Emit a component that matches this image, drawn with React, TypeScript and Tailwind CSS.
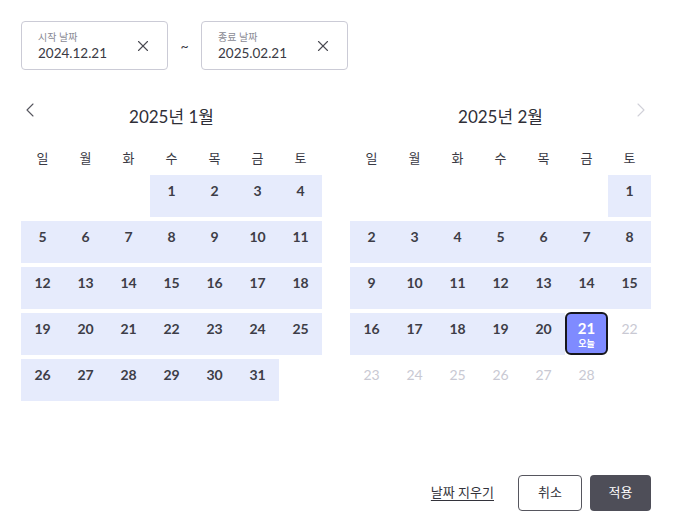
import { ChevronLeft, ChevronRight, X } from "lucide-react";

const days = ["일", "월", "화", "수", "목", "금", "토"];

type Cell = { n?: number; inRange?: boolean; disabled?: boolean; today?: boolean };

const jan: Cell[] = [
  {}, {}, {},
  ...Array.from({ length: 31 }, (_, i) => ({ n: i + 1, inRange: true })),
];

const feb: Cell[] = [
  {}, {}, {}, {}, {}, {},
  ...Array.from({ length: 28 }, (_, i) => {
    const n = i + 1;
    if (n < 21) return { n, inRange: true };
    if (n === 21) return { n, today: true };
    return { n, disabled: true };
  }),
];

const DateInput = ({ label, value }: { label: string; value: string }) => (
  <div className="w-[147px] h-[49px] border border-[#cbcbd6] rounded-[4px] flex items-center justify-between pl-[16px] pr-[15px]">
    <div className="flex flex-col pt-[1px]">
      <span className="text-[10px] leading-[13px] text-[#8a8a94]">{label}</span>
      <span className="text-[13.5px] leading-[18px] text-[#3a3a44]">{value}</span>
    </div>
    <X size={18} strokeWidth={1.5} className="text-[#4a4a52]" />
  </div>
);

const Month = ({ title, cells, prev, next }: { title: string; cells: Cell[]; prev?: boolean; next?: boolean }) => (
  <div className="w-[301px]">
    <div className="relative h-[24px] flex justify-center">
      {prev && (
        <ChevronLeft size={24} strokeWidth={1.1} className="absolute left-[-3px] top-[-7px] text-[#55555e]" />
      )}
      <span className="text-[17px] leading-[24px] text-[#2f2f38]">{title}</span>
      {next && (
        <ChevronRight size={24} strokeWidth={1.1} className="absolute right-[-2px] top-[-7px] text-[#d0d0d8]" />
      )}
    </div>
    <div className="grid grid-cols-7 mt-[19px] h-[20px]">
      {days.map((d) => (
        <div key={d} className="text-center text-[13px] leading-[20px] text-[#3a3a44]">{d}</div>
      ))}
    </div>
    <div className="grid grid-cols-7 gap-y-[4px] mt-[7px]">
      {cells.map((c, i) => {
        if (!c.n) return <div key={i} className="h-[42px]" />;
        if (c.today)
          return (
            <div key={i} className="h-[43px] -mt-[1px] bg-[#7f8bff] border-2 border-[#16161c] rounded-[6px] flex flex-col items-center pt-[4px]">
              <span className="text-[15px] leading-[20px] font-bold text-white">{c.n}</span>
              <span className="text-[9px] leading-[11px] font-bold text-white">오늘</span>
            </div>
          );
        return (
          <div
            key={i}
            className={
              "h-[42px] flex justify-center pt-[6px] " + (c.inRange ? "bg-[#e6ebfc]" : "")
            }
          >
            <span
              className={
                c.disabled
                  ? "text-[14px] leading-[20px] text-[#c9c9d3]"
                  : "text-[14px] leading-[20px] font-bold text-[#3d3d47]"
              }
            >
              {c.n}
            </span>
          </div>
        );
      })}
    </div>
  </div>
);

export default function App() {
  return (
    <div
      className="w-[680px] h-[532px] bg-white pt-[21px] px-[21px] flex flex-col"
      style={{ fontFamily: "Lato, 'Noto Sans CJK KR', sans-serif" }}
    >
      <div className="flex items-center">
        <DateInput label="시작 날짜" value="2024.12.21" />
        <span className="w-[33px] text-center text-[14px] text-[#3a3a44]">~</span>
        <DateInput label="종료 날짜" value="2025.02.21" />
      </div>

      <div className="flex gap-[28px] mt-[35px]">
        <Month title="2025년 1월" cells={jan} prev />
        <Month title="2025년 2월" cells={feb} next />
      </div>

      <div className="flex-1" />

      <div className="flex items-center justify-end gap-[8px] pr-[8px] mb-[21px]">
        <button className="text-[13px] text-[#33333b] underline underline-offset-[3px] mr-[16px]">날짜 지우기</button>
        <button className="w-[64px] h-[36px] border border-[#56565e] rounded-[4px] text-[13px] text-[#33333b]">취소</button>
        <button className="w-[61px] h-[36px] bg-[#4e4e58] rounded-[4px] text-[13px] text-white">적용</button>
      </div>
    </div>
  );
}
